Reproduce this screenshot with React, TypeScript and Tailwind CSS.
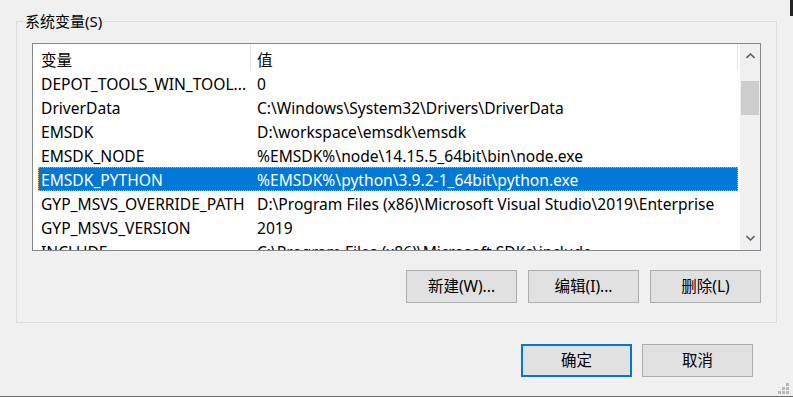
const rows = [
  { name: "DEPOT_TOOLS_WIN_TOOL...", value: "0" },
  { name: "DriverData", value: "C:\\Windows\\System32\\Drivers\\DriverData" },
  { name: "EMSDK", value: "D:\\workspace\\emsdk\\emsdk" },
  { name: "EMSDK_NODE", value: "%EMSDK%\\node\\14.15.5_64bit\\bin\\node.exe" },
  { name: "EMSDK_PYTHON", value: "%EMSDK%\\python\\3.9.2-1_64bit\\python.exe", selected: true },
  { name: "GYP_MSVS_OVERRIDE_PATH", value: "D:\\Program Files (x86)\\Microsoft Visual Studio\\2019\\Enterprise" },
  { name: "GYP_MSVS_VERSION", value: "2019" },
  { name: "INCLUDE", value: "C:\\Program Files (x86)\\Microsoft SDKs\\include" },
];

function Chevron({ up }: { up?: boolean }) {
  return (
    <svg width="9" height="6" viewBox="0 0 9 6">
      <polyline
        points={up ? "0.5,5 4.5,1 8.5,5" : "0.5,1 4.5,5 8.5,1"}
        fill="none"
        stroke="#606060"
        strokeWidth="1.6"
      />
    </svg>
  );
}

function WinButton({ label, focused }: { label: string; focused?: boolean }) {
  return (
    <button
      type="button"
      className={
        focused
          ? "h-[33px] w-[111px] border-2 border-[#0078d7] bg-[#e1e1e1] text-[15.5px] leading-none text-black"
          : "h-[33px] w-[111px] border border-[#adadad] bg-[#e1e1e1] text-[15.5px] leading-none text-black"
      }
    >
      {label}
    </button>
  );
}

export default function App() {
  return (
    <div
      className="relative h-[397px] w-[793px] overflow-hidden bg-[#f0f0f0] text-[15px] text-black"
      style={{ fontFamily: '"Noto Sans", "Noto Sans CJK SC", sans-serif' }}
    >
      <div className="pl-4 pt-[11px]">
        <fieldset className="h-[312px] w-[761px] border border-[#dcdcdc]">
          <legend className="ml-[6px] px-[2px] leading-[20px]">系统变量(S)</legend>

          <div className="px-[15px]">
            {/* list view */}
            <div className="mt-[12px] flex h-[208px] border border-[#828790] bg-white text-[15.6px]">
              <div className="flex-1 overflow-hidden pl-[5px]">
                <div className="flex h-[27px] w-[700px] items-stretch">
                  <div className="flex w-[213px] items-center border-r border-[#e5e5e5] pl-[3px] pt-[6px]">变量</div>
                  <div className="flex flex-1 items-center border-r border-[#e5e5e5] pl-[6px] pt-[6px]">值</div>
                </div>
                {rows.map((r) => (
                  <div
                    key={r.name}
                    className={
                      r.selected
                        ? "flex h-[24px] w-[700px] items-center bg-[#0078d7] pt-[3px] text-white outline-1 -outline-offset-1 outline-dotted outline-[#f3a04a]"
                        : "flex h-[24px] w-[700px] items-center pt-[3px]"
                    }
                  >
                    <div className="w-[213px] truncate pl-[3px] whitespace-nowrap">{r.name}</div>
                    <div className="flex-1 pl-[6px] whitespace-nowrap">{r.value}</div>
                  </div>
                ))}
              </div>

              {/* scrollbar */}
              <div className="flex w-[20px] flex-col bg-[#f0f0f0]">
                <div className="flex h-[24px] items-center justify-center">
                  <Chevron up />
                </div>
                <div className="h-[13px]" />
                <div className="mx-[1px] h-[34px] bg-[#cdcdcd]" />
                <div className="flex-1" />
                <div className="flex h-[24px] items-center justify-center">
                  <Chevron />
                </div>
              </div>
            </div>

            <div className="mt-[19px] flex justify-end gap-[11px]">
              <WinButton label="新建(W)..." />
              <WinButton label="编辑(I)..." />
              <WinButton label="删除(L)" />
            </div>
          </div>
        </fieldset>
      </div>

      <div className="mt-[21px] flex justify-end gap-[10px] pr-[40px]">
        <WinButton label="确定" focused />
        <WinButton label="取消" />
      </div>

      {/* size grip */}
      <div className="absolute bottom-[3px] right-[4px] grid grid-cols-3 gap-[1px]">
        <span className="h-[3px] w-[3px]" />
        <span className="h-[3px] w-[3px]" />
        <span className="h-[3px] w-[3px] bg-[#b8b8b8]" />
        <span className="h-[3px] w-[3px]" />
        <span className="h-[3px] w-[3px] bg-[#b8b8b8]" />
        <span className="h-[3px] w-[3px] bg-[#b8b8b8]" />
        <span className="h-[3px] w-[3px] bg-[#b8b8b8]" />
        <span className="h-[3px] w-[3px] bg-[#b8b8b8]" />
        <span className="h-[3px] w-[3px] bg-[#b8b8b8]" />
      </div>

      {/* window edge */}
      <div className="absolute right-0 top-0 h-[16px] w-[3px] bg-[#222]" />
      <div className="absolute bottom-0 left-0 h-[1px] w-full bg-[#6f6f6f]" />
    </div>
  );
}
